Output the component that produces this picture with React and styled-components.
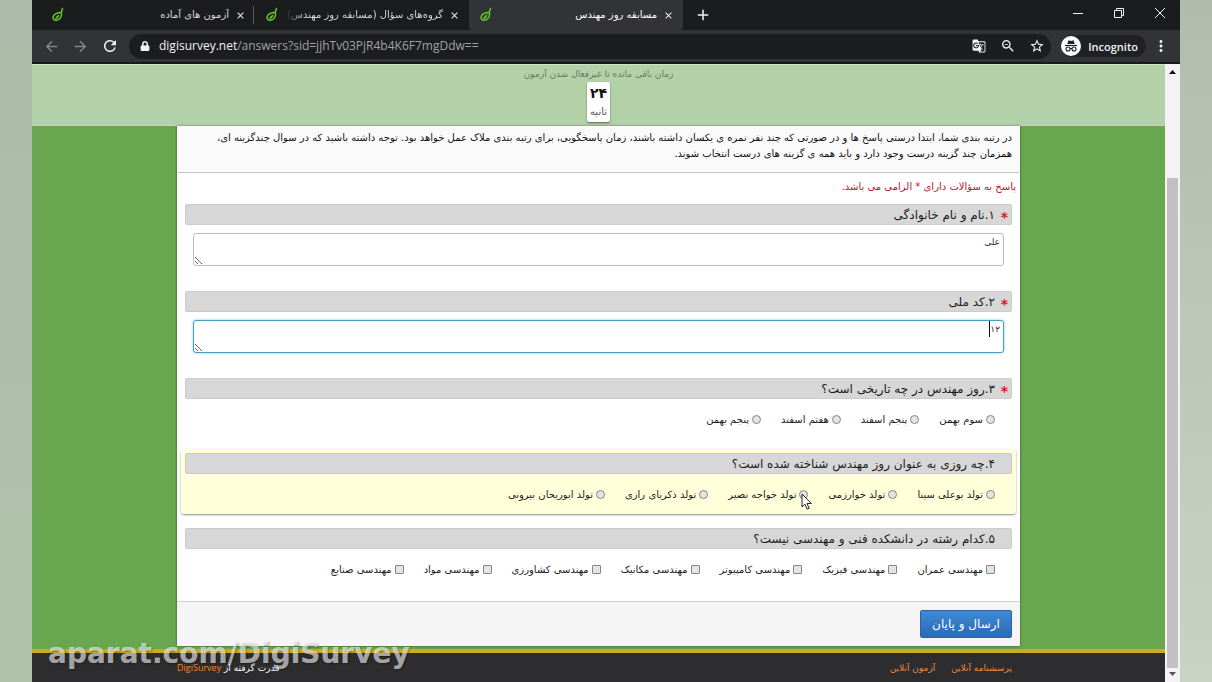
import React from 'react';
import styled, { createGlobalStyle, css } from 'styled-components';
import { FaLock } from 'react-icons/fa';
import {
  MdArrowBack,
  MdArrowForward,
  MdRefresh,
  MdStarBorder,
  MdMoreVert,
  MdClose,
  MdAdd,
  MdGTranslate,
  MdOutlineZoomOut
} from 'react-icons/md';

const GlobalStyle = createGlobalStyle`
  * {
    box-sizing: border-box;
  }

  body {
    margin: 0;
    background: #b3beae;
    font-family: 'DejaVu Sans', 'Liberation Sans', sans-serif;
  }

  button,
  input,
  textarea {
    font-family: inherit;
  }
`;

const Desktop = styled.div`
  position: relative;
  height: 100vh;
  padding: 0 32px;
  overflow: hidden;
  background:
    linear-gradient(#b2bbae, #c9d2c4) right / 32px 100% no-repeat,
    linear-gradient(#aebaa9, #b0c2aa) left / 32px 100% no-repeat;
`;

const Browser = styled.div`
  display: flex;
  flex-direction: column;
  height: 100%;
  background: #fff;
`;

/* Browser chrome */

const TabStrip = styled.div`
  display: flex;
  align-items: stretch;
  height: 30px;
  padding-left: 9px;
  background: #1b1c1e;
`;

const TabBox = styled.div`
  display: flex;
  align-items: center;
  gap: 6px;
  width: 214px;
  padding: 0 8px 0 10px;
  border-right: 1px solid transparent;
  color: #d3d5d8;

  ${({ $divider }) => $divider && css`
    background: linear-gradient(#55575a, #55575a) right center / 1px 18px no-repeat;
  `}

  ${({ $active }) => $active && css`
    background: #323337;
    border-radius: 0 0 3px 3px;
    color: #fff;
  `}
`;

const TabTitle = styled.span`
  flex: 1;
  overflow: hidden;
  direction: rtl;
  white-space: nowrap;
  font-size: 10px;
  line-height: 20px;
  ${({ $fade }) => $fade && css`
    mask-image: linear-gradient(to right, transparent, #000 20px);
  `}
`;

const ChromeButton = styled.button`
  display: flex;
  align-items: center;
  justify-content: center;
  width: ${({ $width }) => $width || 29}px;
  padding: 0;
  border: 0;
  background: none;
  color: ${({ $dim }) => ($dim ? '#85878b' : '#f1f3f4')};
`;

const WindowControls = styled.div`
  display: flex;
  height: 26px;
  margin-left: auto;
`;

const Toolbar = styled.div`
  display: flex;
  align-items: center;
  height: 34px;
  padding: 0 5px;
  background: #323337;
  border-bottom: 2px solid #18191b;
`;

const AddressBar = styled.div`
  display: flex;
  flex: 1;
  align-items: center;
  height: 25px;
  margin: 0 10px 0 5px;
  padding-left: 11px;
  border-radius: 13px;
  background: #1c1d20;
  color: #f1f3f4;
`;

const AddressText = styled.div`
  flex: 1;
  margin-left: 9px;
  font-family: 'Open Sans', sans-serif;
  font-size: 12px;
  line-height: 20px;
  color: #a0a3a7;

  b {
    font-weight: 500;
    color: #f1f3f4;
  }
`;

const Incognito = styled.div`
  display: flex;
  align-items: center;
  gap: 7px;
  height: 22px;
  padding-right: 8px;
  border-radius: 11px;
  background: #202124;
  color: #f1f3f4;
  font-family: 'Open Sans', sans-serif;
  font-size: 11px;
  font-weight: 600;
`;

/* Survey page */

const Viewport = styled.div`
  display: flex;
  flex: 1;
  min-height: 0;
  overflow: hidden;
`;

const Page = styled.main`
  display: flex;
  flex: 1;
  flex-direction: column;
  min-width: 0;
  direction: rtl;
  background: #68a74f;
`;

const TimerBar = styled.header`
  display: flex;
  flex-direction: column;
  align-items: center;
  height: 62px;
  padding-top: 2px;
  border-top: 1px solid #cfe3c6;
  border-bottom: 1px solid #c3d3bd;
  background: #b3d1a8;
  color: #647d5b;
  font-size: 9px;
  line-height: 14px;
`;

const TimerCard = styled.div`
  display: flex;
  flex-direction: column;
  align-items: center;
  height: 40px;
  margin-top: 1px;
  padding: 1px 3px 0;
  border-radius: 2px;
  background: #fff;
  box-shadow: 0 1px 2px rgba(0, 0, 0, 0.5);
  color: #555;
  font-size: 10px;
  line-height: 18px;

  strong {
    color: #111;
    font-size: 14px;
    line-height: 20px;
  }
`;

const Sheet = styled.form`
  width: calc(100% - 290px);
  margin: 0 auto 3px;
  background: #fff;
  box-shadow: 0 0 2px rgba(0, 0, 0, 0.6);
`;

const Intro = styled.p`
  min-height: 47px;
  margin: 0 1px;
  padding: 4px 7px 10px;
  border-bottom: 1px solid #c4c4c4;
  background: #fafafa;
  color: #111;
  font-size: 10px;
  line-height: 16px;
`;

const RequiredNote = styled.p`
  margin: 0;
  padding: 6px 4px 5px;
  color: #b5172f;
  font-size: 10px;
  line-height: 16px;
`;

const QuestionBox = styled.fieldset`
  min-width: 0;
  margin: 0 4px;
  padding: 4px;
  border: 0;
  border-radius: 3px;

  ${({ $highlight }) => $highlight && css`
    margin-bottom: 10px;
    background: #ffffd9;
    box-shadow: 0 1px 2px rgba(0, 0, 0, 0.45);
  `}
`;

const QuestionTitle = styled.div`
  display: flex;
  align-items: center;
  height: 21px;
  padding: 0 3px;
  border: 1px solid #cbcbcb;
  border-radius: 2px;
  background: #d7d7d7;
  color: #1c1c1c;
  font-size: 12px;
  line-height: 18px;
`;

const Star = styled.span`
  width: 13px;
  padding-top: 4px;
  color: #d9142b;
  font-size: 14px;
  font-weight: 700;
`;

const AnswerField = styled.div`
  position: relative;
  display: flex;
  margin: 8px 8px 17px;
`;

const AnswerText = styled.textarea`
  width: 100%;
  height: 33px;
  padding: 0 3px;
  border: 1px solid #bbb;
  border-radius: 3px;
  outline: 0;
  color: #333;
  font-size: 9px;
  line-height: 16px;
  overflow: hidden;
  resize: vertical;

  ${({ $focused }) => $focused && css`
    border-color: #4a9cc0;
    box-shadow: 0 0 3px rgba(82, 188, 236, 0.7);
  `}
`;

const Caret = styled.i`
  position: absolute;
  top: 1px;
  right: 14px;
  width: 1px;
  height: 16px;
  background: #111;
`;

const Options = styled.div`
  display: flex;
  gap: 20px;
  padding: 12px 17px ${({ $bottom }) => $bottom}px;
`;

const Option = styled.label`
  position: relative;
  display: flex;
  align-items: center;
  gap: 3px;
  color: #222;
  font-size: 10px;
  line-height: 17px;
  white-space: nowrap;
`;

const Choice = styled.input`
  width: 9px;
  height: 9px;
  margin: 0;
  appearance: none;
  border: 1px solid #858585;
  border-radius: ${({ type }) => (type === 'radio' ? '50%' : '1px')};
  background: #e4e4e4;
`;

const Pointer = styled.svg`
  position: absolute;
  top: 7px;
  right: -5px;
  z-index: 2;
`;

const SubmitRow = styled.div`
  padding: 8px;
  border-top: 1px solid #cfcfcf;
  background: #f5f5f5;
`;

const SubmitButton = styled.button`
  display: block;
  width: 92px;
  height: 28px;
  padding: 0;
  border: 1px solid #2a62a5;
  border-radius: 2px;
  background: linear-gradient(#3f8ad8, #2c69b4);
  color: #fff;
  font-size: 12px;
`;

const Footer = styled.footer`
  display: flex;
  flex: 1;
  justify-content: space-between;
  padding: 6px 153px 0 145px;
  border-top: 4px solid #d0aa20;
  background: #2d2c2e;
  color: #fff;
  font-size: 9px;
  line-height: 18px;

  a {
    color: #ee8a3a;
    text-decoration: none;
  }
`;

const FooterLinks = styled.nav`
  display: flex;
  gap: 16px;
`;

const Brand = styled.a`
  font-family: 'Open Sans', sans-serif;
  font-size: 9px;
`;

const Scrollbar = styled.div`
  display: flex;
  flex-direction: column;
  align-items: center;
  width: 15px;
  padding: 5px 0;
  background: #f3f3f3;
`;

const Thumb = styled.div`
  flex: 1;
  width: 11px;
  margin: 104px 0 4px;
  background: #c1c1c1;
`;

const Watermark = styled.div`
  position: absolute;
  left: 48px;
  bottom: 12px;
  color: rgba(255, 255, 255, 0.62);
  font-family: 'DejaVu Sans', sans-serif;
  font-size: 28px;
  font-weight: 700;
  line-height: 32px;
  text-shadow: 1px 1px 2px rgba(0, 0, 0, 0.35);
  pointer-events: none;
`;

const tabs = [
  { title: 'آزمون های آماده', divider: true },
  { title: 'گروه‌های سؤال (مسابقه روز مهندس)', fade: true },
  { title: 'مسابقه روز مهندس', active: true }
];

const questions = [
  { number: '۱', title: 'نام و نام خانوادگی', required: true, answer: 'علی' },
  { number: '۲', title: 'کد ملی', required: true, answer: '۱۲', focused: true },
  {
    number: '۳',
    title: 'روز مهندس در چه تاریخی است؟',
    required: true,
    type: 'radio',
    options: ['سوم بهمن', 'پنجم اسفند', 'هفتم اسفند', 'پنجم بهمن'],
    bottom: 17
  },
  {
    number: '۴',
    title: 'چه روزی به عنوان روز مهندس شناخته شده است؟',
    type: 'radio',
    options: ['تولد بوعلی سینا', 'تولد خوارزمی', 'تولد خواجه نصیر', 'تولد ذکریای رازی', 'تولد ابوریحان بیرونی'],
    highlight: true,
    hovered: 2,
    bottom: 7
  },
  {
    number: '۵',
    title: 'کدام رشته در دانشکده فنی و مهندسی نیست؟',
    type: 'checkbox',
    options: [
      'مهندسی عمران',
      'مهندسی فیزیک',
      'مهندسی کامپیوتر',
      'مهندسی مکانیک',
      'مهندسی کشاورزی',
      'مهندسی مواد',
      'مهندسی صنایع'
    ],
    bottom: 19
  }
];

const Leaf = () => (
  <svg width="14" height="16" viewBox="0 0 14 16" fill="none" aria-hidden="true">
    <path
      d="M11.500 1.500 10.300 5.300C11.300 9 9.500 12.500 5.500 13.300 2 13.800 1.200 10.500 3.200 7.800 5 5.600 7.600 5.600 10.300 5.300Z"
      stroke="#62c425"
      strokeWidth="1.500"
      strokeLinejoin="round"
    />
    <path d="M4 12.500C4.300 10 6 8.500 8.500 7.500 8.200 10 6.800 11.800 4 12.500Z" fill="#62c425" />
  </svg>
);

const IncognitoIcon = () => (
  <svg width="20" height="20" viewBox="0 0 20 20" aria-hidden="true">
    <circle cx="10" cy="10" r="10" fill="#fff" />
    <path d="M6.300 8 7.500 4.300 10 5 12.500 4.300 13.700 8Z" fill="#202124" />
    <path d="M4 9.500h12" stroke="#202124" strokeWidth="1.200" />
    <g fill="none" stroke="#202124" strokeWidth="1.100">
      <circle cx="7" cy="13" r="2" />
      <circle cx="13" cy="13" r="2" />
      <path d="M9 12.700q1-.7 2 0" />
    </g>
  </svg>
);

const MousePointer = () => (
  <Pointer width="12" height="18" viewBox="0 0 12 18" aria-hidden="true">
    <path d="M1 1v13l3-2.800 2.200 5 2-.9L6 10.500h4.300Z" fill="#fff" stroke="#222" />
  </Pointer>
);

const Arrow = ({ down }) => (
  <svg width="7" height="5" viewBox="0 0 7 5" aria-hidden="true">
    <path d={down ? 'M0 0h7L3.500 4Z' : 'M0 5h7L3.500 1Z'} fill={down ? '#555' : '#111'} />
  </svg>
);

const Question = ({ question }) => {
  const { number, title, required, answer, focused, type, options, highlight, hovered, bottom } = question;
  const titleId = `question-${number}`;

  return (
    <QuestionBox $highlight={highlight} aria-labelledby={titleId}>
      <QuestionTitle>
        <Star>{required && '*'}</Star>
        <span id={titleId}>{number}.{title}</span>
      </QuestionTitle>
      {options ? (
        <Options $bottom={bottom}>
          {options.map((option, index) => (
            <Option key={option}>
              <Choice type={type} name={titleId} />
              {option}
              {hovered === index && <MousePointer />}
            </Option>
          ))}
        </Options>
      ) : (
        <AnswerField>
          <AnswerText aria-labelledby={titleId} defaultValue={answer} $focused={focused} />
          {focused && <Caret />}
        </AnswerField>
      )}
    </QuestionBox>
  );
};

const App = () => {
  return (
    <Desktop>
      <GlobalStyle />
      <Browser>
        <TabStrip>
          {tabs.map((tab) => (
            <TabBox key={tab.title} $active={tab.active} $divider={tab.divider}>
              <Leaf />
              <TabTitle $fade={tab.fade}>{tab.title}</TabTitle>
              <ChromeButton $width={11} aria-label="Close tab"><MdClose size={13} /></ChromeButton>
            </TabBox>
          ))}
          <ChromeButton $width={40} aria-label="New tab"><MdAdd size={18} /></ChromeButton>
          <WindowControls>
            <ChromeButton $width={41} aria-label="Minimize">
              <svg width="10" height="10" viewBox="0 0 10 10" stroke="currentColor"><path d="M0 5.500h10" /></svg>
            </ChromeButton>
            <ChromeButton $width={41} aria-label="Restore">
              <svg width="10" height="10" viewBox="0 0 10 10" fill="none" stroke="currentColor">
                <path d="M.5 2.500h7v7h-7ZM2.500 2.500v-2h7v7h-2" />
              </svg>
            </ChromeButton>
            <ChromeButton $width={41} aria-label="Close window">
              <svg width="10" height="10" viewBox="0 0 10 10" stroke="currentColor"><path d="m0 0 10 10M10 0 0 10" /></svg>
            </ChromeButton>
          </WindowControls>
        </TabStrip>

        <Toolbar>
          <ChromeButton $dim aria-label="Back"><MdArrowBack size={17} /></ChromeButton>
          <ChromeButton $dim aria-label="Forward"><MdArrowForward size={17} /></ChromeButton>
          <ChromeButton aria-label="Reload"><MdRefresh size={18} /></ChromeButton>
          <AddressBar>
            <FaLock size={10} />
            <AddressText>
              <b>digisurvey.net</b>/answers?sid=jjhTv03PjR4b4K6F7mgDdw==
            </AddressText>
            <ChromeButton aria-label="Translate"><MdGTranslate size={14} /></ChromeButton>
            <ChromeButton aria-label="Zoom"><MdOutlineZoomOut size={16} /></ChromeButton>
            <ChromeButton aria-label="Bookmark"><MdStarBorder size={16} /></ChromeButton>
          </AddressBar>
          <Incognito>
            <IncognitoIcon />
            Incognito
          </Incognito>
          <ChromeButton aria-label="Menu"><MdMoreVert size={18} /></ChromeButton>
        </Toolbar>

        <Viewport>
          <Page lang="fa">
            <TimerBar>
              <span>زمان باقی مانده تا غیرفعال شدن آزمون</span>
              <TimerCard>
                <strong>۲۴</strong>
                ثانیه
              </TimerCard>
            </TimerBar>
            <Sheet onSubmit={(event) => event.preventDefault()}>
              <Intro>
                در رتبه بندی شما، ابتدا درستی پاسخ ها و در صورتی که چند نفر نمره ی یکسان داشته باشند، زمان
                پاسخگویی، برای رتبه بندی ملاک عمل خواهد بود. توجه داشته باشید که در سوال چندگزینه ای،
                همزمان چند گزینه درست وجود دارد و باید همه ی گزینه های درست انتخاب شوند.
              </Intro>
              <RequiredNote>پاسخ به سؤالات دارای * الزامی می باشد.</RequiredNote>
              {questions.map((question) => (
                <Question key={question.number} question={question} />
              ))}
              <SubmitRow>
                <SubmitButton type="submit">ارسال و پایان</SubmitButton>
              </SubmitRow>
            </Sheet>
            <Footer>
              <FooterLinks>
                <a href="#survey">پرسشنامه آنلاین</a>
                <a href="#exam">آزمون آنلاین</a>
              </FooterLinks>
              <span>قدرت گرفته از <Brand href="#digisurvey">DigiSurvey</Brand></span>
            </Footer>
          </Page>
          <Scrollbar>
            <Arrow />
            <Thumb />
            <Arrow down />
          </Scrollbar>
        </Viewport>
      </Browser>
      <Watermark>aparat.com/DigiSurvey</Watermark>
    </Desktop>
  );
};

export default App;
